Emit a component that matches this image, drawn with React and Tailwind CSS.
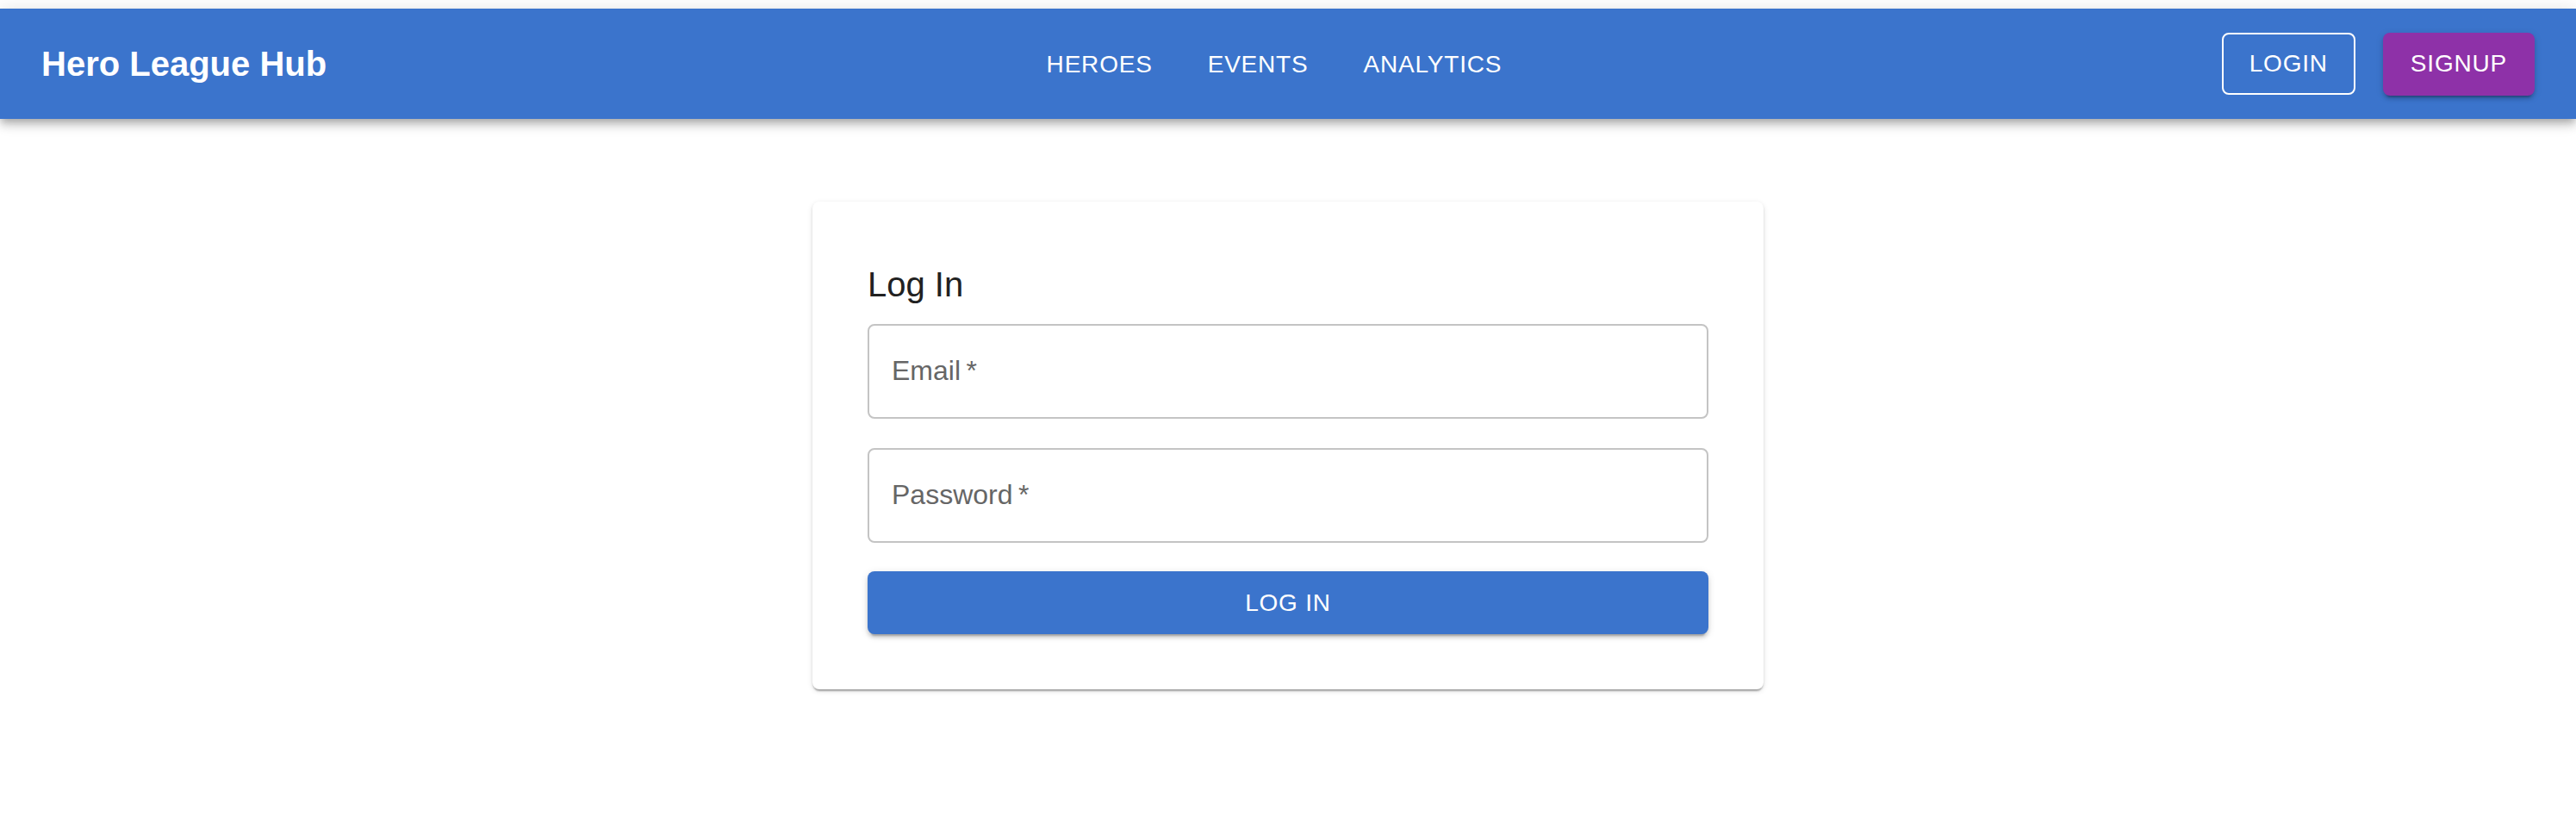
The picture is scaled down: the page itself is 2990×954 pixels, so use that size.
import React, { useState } from "react";

export default function App() {
  const [form, setForm] = useState({ email: "", password: "" });

  const handleChange = (e) => {
    const { name, value } = e.target;
    setForm((prev) => ({ ...prev, [name]: value }));
  };

  const navItems = ["HEROES", "EVENTS", "ANALYTICS"];

  return (
    <div className="min-h-screen bg-white pt-[10px] font-['Liberation_Sans',Arial,sans-serif]">
      {/* App bar */}
      <header className="h-[128px] bg-[#3b74cc] flex items-center px-[48px] shadow-[0_4px_8px_-2px_rgba(0,0,0,0.2),0_8px_10px_0_rgba(0,0,0,0.14),0_2px_20px_0_rgba(0,0,0,0.12)]">
        <div className="text-[40px] font-bold text-white leading-[64px]">Hero League Hub</div>

        <nav className="flex-1 flex justify-center gap-[32px]">
          {navItems.map((item) => (
            <button
              key={item}
              className="px-[16px] py-[12px] text-[28px] leading-[49px] tracking-[0.8px] text-white"
            >
              {item}
            </button>
          ))}
        </nav>

        <div className="flex items-center gap-[32px]">
          <button className="h-[72px] px-[30px] border-2 border-white rounded-[8px] text-[28px] tracking-[0.8px] text-white">
            LOGIN
          </button>
          <button className="h-[73px] px-[32px] bg-[#8e31a8] rounded-[8px] text-[28px] tracking-[0.8px] text-white shadow-[0_6px_2px_-4px_rgba(0,0,0,0.2),0_4px_4px_0_rgba(0,0,0,0.14),0_2px_10px_0_rgba(0,0,0,0.12)]">
            SIGNUP
          </button>
        </div>
      </header>

      {/* Login card */}
      <div className="mx-auto mt-[96px] w-[1104px] bg-white rounded-[8px] p-[64px] shadow-[0_4px_2px_-2px_rgba(0,0,0,0.2),0_2px_2px_0_rgba(0,0,0,0.14),0_2px_6px_0_rgba(0,0,0,0.12)]">
        <h2 className="text-[40px] leading-[64px] text-[#212121]">Log In</h2>

        <form onSubmit={(e) => e.preventDefault()} className="flex flex-col">
          <input
            type="email"
            name="email"
            value={form.email}
            onChange={handleChange}
            placeholder={"Email\u2009*"}
            className="mt-[14px] h-[110px] border-2 border-[#c4c4c4] rounded-[8px] px-[26px] pb-[2px] text-[32px] text-[#212121] placeholder:text-[#666666] outline-none"
          />
          <input
            type="password"
            name="password"
            value={form.password}
            onChange={handleChange}
            placeholder={"Password\u2009*"}
            className="mt-[34px] h-[110px] border-2 border-[#c4c4c4] rounded-[8px] px-[26px] pb-[2px] text-[32px] text-[#212121] placeholder:text-[#666666] outline-none"
          />
          <button
            type="submit"
            className="mt-[33px] h-[73px] w-full bg-[#3b74cc] rounded-[8px] text-[28px] tracking-[0.8px] text-white shadow-[0_6px_2px_-4px_rgba(0,0,0,0.2),0_4px_4px_0_rgba(0,0,0,0.14),0_2px_10px_0_rgba(0,0,0,0.12)]"
          >
            LOG IN
          </button>
        </form>
      </div>
    </div>
  );
}
